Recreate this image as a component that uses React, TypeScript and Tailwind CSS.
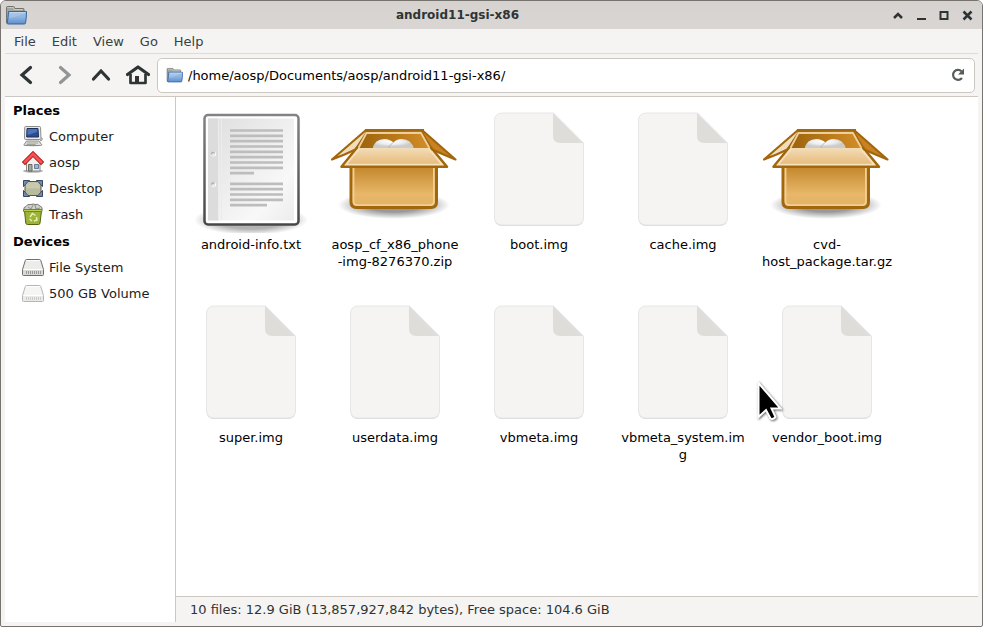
import type { ReactNode } from "react";

const menus = ["File", "Edit", "View", "Go", "Help"];

function FolderIcon({ className }: { className: string }) {
  return (
    <svg viewBox="0 0 22 20" className={className} aria-hidden="true">
      <defs>
        <linearGradient id="folderFront" x2="0" y2="1">
          <stop stopColor="#9dbfe8" />
          <stop offset=".45" stopColor="#8fb4e1" />
          <stop offset="1" stopColor="#5c8fcc" />
        </linearGradient>
      </defs>
      <path d="M1.500 18V2.500q0-1 1-1h6q.8 0 1 1l.3 1H18q1 0 1 1V18z" fill="#a3a5a1" stroke="#70726f" />
      <path d="M2.500 2.500h6l.5 2h9" fill="none" stroke="#c5c7c3" />
      <path d="M3.500 6.500h18q0 7-1 11.500-.2 1-1.200 1H3q-1 0-.8-1 1-5 1.300-11.500z" fill="url(#folderFront)" stroke="#3465a4" />
      <path d="M4.500 7.500h16" stroke="#bcd4f0" />
      <path d="M4 13.500Q12 12 20.500 8v-.5h-16z" fill="#fff" opacity=".15" />
    </svg>
  );
}

function ComputerIcon() {
  return (
    <svg viewBox="0 0 22 22" className="size-[22px]" aria-hidden="true">
      <ellipse cx="11" cy="20" rx="10" ry="1.500" fill="#000" opacity=".2" />
      <path d="M17 13q4-1 3 2l-2 1" fill="none" stroke="#888a85" />
      <path d="M3.500 1.500h14q1 0 1 1l.5 11q0 1-1 1H3.500q-1 0-1-1l.2-11q0-1 .8-1z" fill="#e8e8e4" stroke="#8c8e89" />
      <path d="M5 3.500h11l.5 8.500H4.700z" fill="#2a4d92" stroke="#1b2f62" />
      <path d="M5.500 4h10l-.5 3-9.500 3z" fill="#6a8dcc" opacity=".6" />
      <path d="M4.500 16h12.500l2.500 3.500q0 1-1 1H3q-1 0-.8-1z" fill="#dededa" stroke="#8c8e89" />
      <path d="M5 18h11M4.500 19.500h9" stroke="#a2a49f" />
    </svg>
  );
}

function HomeIcon() {
  return (
    <svg viewBox="0 0 22 22" className="size-[22px]" aria-hidden="true">
      <ellipse cx="11" cy="20" rx="10" ry="1.800" fill="#000" opacity=".3" />
      <path d="M4.500 10L11 4l7 6v10H4.500z" fill="#eeeeec" stroke="#888a85" />
      <path d="M6.500 13.500h3.500V20H6.500z" fill="#a5a7a2" stroke="#666863" />
      <path d="M12.500 13.500h4v4h-4z" fill="#9bb4d3" stroke="#6a7d96" />
      <path d="M3 11l8-8 8 8" fill="none" stroke="#b01010" strokeWidth="4.500" strokeLinecap="square" />
      <path d="M3 11l8-8 8 8" fill="none" stroke="#f25555" strokeWidth="2.800" strokeLinecap="square" />
    </svg>
  );
}

function DesktopIcon() {
  return (
    <svg viewBox="0 0 22 22" className="size-[22px]" aria-hidden="true">
      <path d="M1.500 3.500h6l-6 6zM14.500 3.500h6v6zM1.500 13.500v6h6zM20.500 13.500v6h-6z" fill="#7189b4" stroke="#364866" />
      <path d="M6 4.500h10l3 3.500v7l-3 3.500H6L3 15V8z" fill="#b9bc9c" stroke="#55574a" />
      <path d="M6.500 5.500h9L18 8.500v3H4v-3z" fill="#d2d4bd" opacity=".6" />
    </svg>
  );
}

function TrashIcon() {
  return (
    <svg viewBox="0 0 22 22" className="size-[22px]" aria-hidden="true">
      <path d="M2 7q-1-3 2-3.500Q5 .8 9 1.500q2-1 4 0 3-1 5 1.500 3 1 2 4z" fill="#cfd2cc" stroke="#787b76" />
      <path d="M6 4l3 2 2-4M13 2l1 4 4-1" fill="none" stroke="#8b8e89" />
      <path d="M2.500 8h17L18 20q-.2 1.500-1.500 1.500h-11Q4 21.500 3.800 20z" fill="#9db33a" stroke="#55640f" />
      <path d="M1.500 6.500h18.500v2H1.500z" fill="#bdd04f" stroke="#76861f" />
      <path d="M8 14l2.500-3.500 3 2M14.500 14l.5 3-3 1M10 18l-2.500-2" fill="none" stroke="#e6f0ae" strokeWidth="1.500" />
    </svg>
  );
}

function DriveIcon({ faded }: { faded?: boolean }) {
  return (
    <svg viewBox="0 0 22 22" className={faded ? "size-[22px] opacity-50" : "size-[22px]"} aria-hidden="true">
      <path d="M4.500 3.500h13q1 0 1.300 1l2.700 9v5q0 1-1 1h-19q-1 0-1-1v-5l2.800-9q.2-1 1.200-1z" fill="#ececea" stroke="#6d6f6b" />
      <path d="M1 13.500h20v5.500H1z" fill="#d9d9d6" />
      <path d="M1.500 13.500h19M4.500 4.500h13" stroke="#fff" />
      <path d="M4 16.500h16" stroke="#989a96" strokeWidth="3" strokeDasharray="1 1" />
    </svg>
  );
}

function BlankIcon() {
  return (
    <svg viewBox="0 0 128 128" className="size-32" aria-hidden="true">
      <path d="M27.500 9H79l29.500 30v74q0 8-8 8h-73q-8 0-8-8V17q0-8 8-8z" fill="#d9d9db" />
      <path d="M27.500 8H78.500l30 30v74q0 8-8 8h-73q-8 0-8-8V16q0-8 8-8z" fill="#f5f4f2" stroke="#e6e6e6" />
      <path d="M78 8l30 30H85q-7 0-7-7z" fill="#deddda" />
    </svg>
  );
}

const textRules = [25, 30.300, 35.700, 41, 46.300, 51.700, 57, 62.300, 78.300, 83.700, 89, 94.300];

function TextIcon() {
  return (
    <svg viewBox="0 0 128 128" className="size-32" aria-hidden="true">
      <defs>
        <radialGradient id="textShadow">
          <stop offset="0.600" stopColor="#000" stopOpacity=".3" />
          <stop offset="1" stopColor="#000" stopOpacity="0" />
        </radialGradient>
        <linearGradient id="textPaper" x2="1" y2="1">
          <stop stopColor="#dedede" />
          <stop offset=".75" stopColor="#f8f8f8" />
          <stop offset="1" stopColor="#ececec" />
        </linearGradient>
        <linearGradient id="textEdge" x2="0" y2="1">
          <stop stopColor="#838383" />
          <stop offset="1" stopColor="#474747" />
        </linearGradient>
      </defs>
      <ellipse cx="64" cy="115" rx="57" ry="15" fill="url(#textShadow)" />
      <rect x="17.500" y="10" width="94" height="109.500" rx="3.500" fill="#fff" stroke="url(#textEdge)" strokeWidth="2.500" />
      <rect x="21" y="13.500" width="86" height="102" fill="url(#textPaper)" />
      <path d="M21 13.500h10v102H21z" fill="#dcdcdc" />
      <path d="M31.500 13.500v102M34.500 13.500v102" stroke="#ececec" />
      {[49, 79.500].map((y) => (
        <g key={y}>
          <circle cx="26.500" cy={y} r="2.500" fill="#fff" />
          <circle cx="26" cy={y - 0.500} r="2" fill="#b0b0b0" />
          <circle cx="26.500" cy={y + 0.500} r="1.500" fill="#e6e6e6" />
        </g>
      ))}
      {textRules.map((y) => (
        <path key={y} d={`M43 ${y + 0.500}h53`} stroke="#bdbdbd" strokeWidth="2.700" />
      ))}
      <path d="M43 68.200h24M43 100.200h37" stroke="#bdbdbd" strokeWidth="2.700" />
    </svg>
  );
}

function PackageIcon() {
  return (
    <svg viewBox="0 0 128 128" className="size-32" aria-hidden="true">
      <defs>
        <radialGradient id="boxShadow">
          <stop offset="0.500" stopColor="#000" stopOpacity=".4" />
          <stop offset="1" stopColor="#000" stopOpacity="0" />
        </radialGradient>
        <linearGradient id="boxFront" x2="0" y2="1">
          <stop stopColor="#bd7e20" />
          <stop offset=".7" stopColor="#e8b76a" />
          <stop offset="1" stopColor="#e3b165" />
        </linearGradient>
        <linearGradient id="boxFlap" x2="0" y2="1">
          <stop stopColor="#f2dcb8" />
          <stop offset="1" stopColor="#e6b871" />
        </linearGradient>
        <linearGradient id="boxInside">
          <stop stopColor="#9c630c" />
          <stop offset="1" stopColor="#d68f28" />
        </linearGradient>
        <radialGradient id="foam" cx=".45" cy=".25">
          <stop stopColor="#fff" />
          <stop offset=".6" stopColor="#ededed" />
          <stop offset="1" stopColor="#cccccc" />
        </radialGradient>
      </defs>
      <ellipse cx="63" cy="100" rx="56" ry="14" fill="url(#boxShadow)" />
      <path d="M20 57h85.500v40q0 5.500-5.500 5.500H25.500q-5.500 0-5.500-5.500z" fill="url(#boxFront)" stroke="#a2660c" strokeWidth="3" />
      <path d="M22.500 58v38q0 4.200 4.200 4.200h72q4.200 0 4.200-4.200V58" fill="none" stroke="#f0cf96" strokeWidth="1.800" />
      <path d="M35 25.500h57l10 20H27z" fill="url(#boxInside)" />
      <path d="M41.500 44q2-10 12-10 5 0 9 3.500 3-3.500 8-3.500 10 0 12.500 10z" fill="url(#foam)" />
      <path d="M62 37.500q-4 3-4.500 6.500" fill="none" stroke="#b5b5b5" />
      <path d="M34.500 25.500L1 54.500l12.500-5 11-5L36 27z" fill="#f1ddba" stroke="#a2660c" strokeWidth="2.200" strokeLinejoin="round" />
      <path d="M91.500 25.500l33 29-12-5-11.500-5-10-17z" fill="#c98122" stroke="#a2660c" strokeWidth="2.200" strokeLinejoin="round" />
      <path d="M34 25.200h59" stroke="#a2660c" strokeWidth="2.500" />
      <path d="M27 44l8.500-16H90l9 16" fill="none" stroke="#edcf9b" strokeWidth="1.800" />
      <path d="M28 43h70l18 18.500H10z" fill="url(#boxFlap)" />
      <path d="M26.500 42L10.500 61.700h105.500L99.500 42" fill="none" stroke="#a2660c" strokeWidth="2.500" strokeLinejoin="round" />
      <path d="M28.500 43.500L15 59.500h96L97.500 43.500" fill="none" stroke="#f7e2bf" strokeWidth="1.600" />
    </svg>
  );
}

const places: { name: string; icon: ReactNode }[] = [
  { name: "Computer", icon: <ComputerIcon /> },
  { name: "aosp", icon: <HomeIcon /> },
  { name: "Desktop", icon: <DesktopIcon /> },
  { name: "Trash", icon: <TrashIcon /> },
];

const devices: { name: string; icon: ReactNode }[] = [
  { name: "File System", icon: <DriveIcon /> },
  { name: "500 GB Volume", icon: <DriveIcon faded /> },
];

const files: { lines: string[]; kind: "text" | "package" | "blank" }[] = [
  { lines: ["android-info.txt"], kind: "text" },
  { lines: ["aosp_cf_x86_phone", "-img-8276370.zip"], kind: "package" },
  { lines: ["boot.img"], kind: "blank" },
  { lines: ["cache.img"], kind: "blank" },
  { lines: ["cvd-", "host_package.tar.gz"], kind: "package" },
  { lines: ["super.img"], kind: "blank" },
  { lines: ["userdata.img"], kind: "blank" },
  { lines: ["vbmeta.img"], kind: "blank" },
  { lines: ["vbmeta_system.im", "g"], kind: "blank" },
  { lines: ["vendor_boot.img"], kind: "blank" },
];

function SideList({ title, items }: { title: string; items: { name: string; icon: ReactNode }[] }) {
  return (
    <section>
      <h2 className="flex h-[26px] items-center pl-2 font-bold">{title}</h2>
      <ul>
        {items.map((item) => (
          <li key={item.name}>
            <button className="flex h-[26px] w-full items-center gap-[5px] pl-[17px] text-left text-[#1c1c1c]">
              {item.icon}
              {item.name}
            </button>
          </li>
        ))}
      </ul>
    </section>
  );
}

function ToolButton({ label, disabled, children }: { label: string; disabled?: boolean; children: ReactNode }) {
  return (
    <button aria-label={label} disabled={disabled} className="flex h-[34px] w-[37px] items-center justify-center text-[#2e3436] disabled:text-[#929595]">
      {children}
    </button>
  );
}

export default function App() {
  return (
    <div className="flex h-screen flex-col overflow-hidden rounded-t-md rounded-b-xs border border-[#77736f] bg-[#f5f4f2] font-['DejaVu_Sans',sans-serif] text-[13px] leading-[17px] text-black">
      <header className="flex h-7 shrink-0 items-center bg-linear-to-b from-[#d6d2cf] to-[#dad6d3] pl-1 text-[#2e3436]">
        <FolderIcon className="h-5 w-[22px]" />
        <h1 className="flex-1 pl-[2px] text-center text-[12px] font-bold">android11-gsi-x86</h1>
        <div className="flex pr-1">
          <button aria-label="Shade" className="flex h-6 w-[23px] items-center justify-center">
            <svg viewBox="0 0 12 12" className="size-3" fill="none" stroke="currentColor" strokeWidth="2.500"><path d="M2 9l4-4 4 4" /></svg>
          </button>
          <button aria-label="Minimize" className="flex h-6 w-[23px] items-center justify-center">
            <svg viewBox="0 0 12 12" className="size-3" fill="none" stroke="currentColor" strokeWidth="2"><path d="M2 10h9" /></svg>
          </button>
          <button aria-label="Maximize" className="flex h-6 w-[23px] items-center justify-center">
            <svg viewBox="0 0 12 12" className="size-3" fill="none" stroke="currentColor" strokeWidth="2"><path d="M2.500 3h7v7h-7z" /></svg>
          </button>
          <button aria-label="Close" className="flex h-6 w-[23px] items-center justify-center">
            <svg viewBox="0 0 12 12" className="size-3" fill="none" stroke="currentColor" strokeWidth="2.500"><path d="M2.500 2.500l8 8M10.500 2.500l-8 8" /></svg>
          </button>
        </div>
      </header>

      <div className="flex min-h-0 flex-1 flex-col px-1 pb-1">
        <nav className="flex h-[25px] shrink-0 gap-4 border-b border-[#dddbd8] pl-[9px] text-[#3b4042]">
          {menus.map((menu) => (
            <button key={menu} className="h-6">{menu}</button>
          ))}
        </nav>

        <div className="flex h-[43px] shrink-0 items-center border-b border-[#cdc7c2] pr-[3px] pl-[3px]">
          <ToolButton label="Back">
            <svg viewBox="0 0 20 20" className="size-5" fill="none" stroke="currentColor" strokeWidth="3.200" strokeLinecap="round"><path d="M13.500 2.500L5 10l8.500 7.500" /></svg>
          </ToolButton>
          <ToolButton label="Forward" disabled>
            <svg viewBox="0 0 20 20" className="size-5" fill="none" stroke="currentColor" strokeWidth="3.200" strokeLinecap="round"><path d="M6.500 2.500L15 10l-8.500 7.500" /></svg>
          </ToolButton>
          <ToolButton label="Up">
            <svg viewBox="0 0 20 20" className="size-5" fill="none" stroke="currentColor" strokeWidth="3.200" strokeLinecap="round"><path d="M2.500 14L10 6l7.500 8" /></svg>
          </ToolButton>
          <ToolButton label="Home">
            <svg viewBox="0 0 24 20" className="h-5 w-6" fill="none" stroke="currentColor" strokeWidth="2.700" strokeLinejoin="round">
              <path d="M1.500 9.500L12 2l10.500 7.500" strokeWidth="3.200" strokeLinecap="round" />
              <path d="M4.500 9v9h15V9" />
              <path d="M9 18v-7h4v7z" fill="currentColor" stroke="none" />
            </svg>
          </ToolButton>
          <div className="ml-px flex h-[35px] flex-1 items-center rounded-[5px] border border-[#cdc7c2] bg-white pr-2 pl-2">
            <FolderIcon className="h-4 w-[17px]" />
            <input aria-label="Location" defaultValue="/home/aosp/Documents/aosp/android11-gsi-x86/" className="min-w-0 flex-1 bg-transparent pl-[5px] outline-none" />
            <button aria-label="Reload" className="text-[#575b5c]">
              <svg viewBox="0 0 16 16" className="size-4" fill="none" stroke="currentColor" strokeWidth="2.200">
                <path d="M11.500 4.200A5 5 0 1 0 12 11" />
                <path d="M14 1.500v6H8z" fill="currentColor" stroke="none" />
              </svg>
            </button>
          </div>
        </div>

        <div className="flex min-h-0 flex-1">
          <aside className="flex w-[171px] shrink-0 flex-col gap-px border-r border-[#cdc7c2] bg-white">
            <SideList title="Places" items={places} />
            <SideList title="Devices" items={devices} />
          </aside>
          <main className="relative flex min-w-0 flex-1 flex-col">
            <ul className="grid flex-1 auto-rows-[193px] grid-cols-[repeat(auto-fill,144px)] bg-white pt-2 pl-[3px]">
              {files.map((file) => (
                <li key={file.lines[0]}>
                  <button className="flex w-full flex-col items-center gap-[3px]">
                    {file.kind === "text" ? <TextIcon /> : file.kind === "package" ? <PackageIcon /> : <BlankIcon />}
                    <span>
                      {file.lines.map((line) => (
                        <span key={line} className="block">{line}</span>
                      ))}
                    </span>
                  </button>
                </li>
              ))}
            </ul>
            <footer className="flex h-[26px] shrink-0 items-center border-t border-[#cdc7c2] pl-[14px] text-[#2e3436]">
              10 files: 12.9 GiB (13,857,927,842 bytes), Free space: 104.6 GiB
            </footer>
            <svg viewBox="0 0 28 42" className="pointer-events-none absolute top-[284px] left-[580px] h-[42px] w-7 drop-shadow-[1px_1px_1px_rgba(0,0,0,0.6)]" aria-hidden="true">
              <path d="M2.500 2v34l7.500-7 4.500 8.500q2.500 1.500 5-1.500l-4-8.500h9z" fill="#000" stroke="#fff" strokeWidth="2" />
            </svg>
          </main>
        </div>
      </div>
    </div>
  );
}
